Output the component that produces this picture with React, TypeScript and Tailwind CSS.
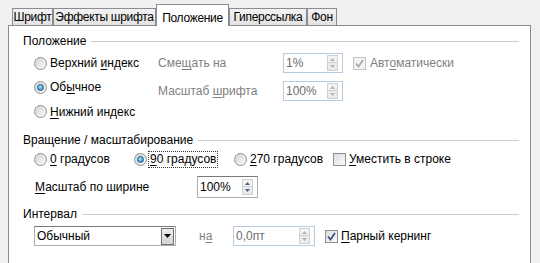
import React from "react";

const font = "font-['Liberation_Sans',Arial,sans-serif]";

function U({ children }: { children: React.ReactNode }) {
  return <span className="underline underline-offset-2">{children}</span>;
}

function Radio({ checked }: { checked?: boolean }) {
  return (
    <span className="flex h-[13px] w-[13px] shrink-0 items-center justify-center rounded-full border border-[#8e8f8f] bg-gradient-to-br from-[#d4d4d4] to-[#fafafa]">
      {checked && (
        <span className="h-[7px] w-[7px] rounded-full border border-[#1a5a8e] bg-[radial-gradient(circle_at_40%_35%,#9fe0ff,#2a78b8)]" />
      )}
    </span>
  );
}

function Check({ checked, disabled }: { checked?: boolean; disabled?: boolean }) {
  return (
    <span
      className={
        disabled
          ? "flex h-[13px] w-[13px] shrink-0 items-center justify-center border border-[#c4c4c4] bg-[#f4f4f4]"
          : "flex h-[13px] w-[13px] shrink-0 items-center justify-center border border-[#8e8f8f] bg-gradient-to-br from-[#dcdcdc] to-[#fbfbfb]"
      }
    >
      {checked && (
        <svg width="11" height="11" viewBox="0 0 11 11">
          <path
            d="M2 5.5 L4.5 8.5 L9 2"
            fill="none"
            stroke={disabled ? "#a8a8a8" : "#3a4f8a"}
            strokeWidth="1.7"
          />
        </svg>
      )}
    </span>
  );
}

function Arrow({ up, color }: { up?: boolean; color: string }) {
  return (
    <svg width="5" height="3" viewBox="0 0 5 3">
      <path d={up ? "M0 3 L2.5 0 L5 3 Z" : "M0 0 L2.5 3 L5 0 Z"} fill={color} />
    </svg>
  );
}

function Spin({
  value,
  w,
  h,
  disabled,
}: {
  value: string;
  w: string;
  h: string;
  disabled?: boolean;
}) {
  const c = disabled ? "#b5b5b5" : "#4d6185";
  return (
    <div
      className={
        (disabled
          ? "border-[#b3cbe3] text-[#6d6d6d] "
          : "border-[#abadb3] border-t-[#7a7a7a] text-black ") +
        "flex shrink-0 items-center justify-between border bg-white pl-[2px] pr-[4px] " +
        w +
        " " +
        h
      }
    >
      <span>{value}</span>
      <div className="flex h-[16px] w-[11px] flex-col">
        <div className="flex h-1/2 items-center justify-center border border-[#d0d0d0] bg-[#f3f3f3]">
          <Arrow up color={c} />
        </div>
        <div className="flex h-1/2 items-center justify-center border border-t-0 border-[#d0d0d0] bg-[#ececec]">
          <Arrow color={c} />
        </div>
      </div>
    </div>
  );
}

function Heading({ children }: { children: React.ReactNode }) {
  return (
    <div className="flex h-[16px] items-center gap-[5px]">
      <span className="shrink-0 leading-none">{children}</span>
      <div className="h-px flex-1 bg-[#cdcdcd]" />
    </div>
  );
}

const tabs = [
  { label: "Шрифт", w: "w-[41px]" },
  { label: "Эффекты шрифта", w: "w-[103px]" },
  { label: "Положение", w: "w-[73px]", active: true },
  { label: "Гиперссылка", w: "w-[78px]" },
  { label: "Фон", w: "w-[30px]" },
];

export default function App() {
  return (
    <div className={"h-[263px] w-[540px] overflow-hidden whitespace-nowrap bg-[#f0f0f0] text-[12px] text-black " + font}>
      <div className="pl-[8px]">
        {/* Tab strip */}
        <div className="flex h-[25px] items-end pl-[4px] tracking-[-0.3px]">
          {tabs.map((t) =>
            t.active ? (
              <div
                key={t.label}
                className={"relative z-10 -mb-px flex h-[22px] items-start justify-center border border-b-0 border-[#898c95] bg-white pt-[4px] " + t.w}
              >
                {t.label}
              </div>
            ) : (
              <div
                key={t.label}
                className={"flex h-[17px] items-center justify-center border border-b-0 border-[#898c95] bg-gradient-to-b from-[#f3f3f3] to-[#e2e2e2] leading-none " + t.w}
              >
                {t.label}
              </div>
            )
          )}
        </div>

        {/* Page */}
        <div className="h-[260px] w-[523px] border border-[#898c95] bg-white pl-[14px] pr-[11px] pt-[7px]">
          <Heading>Положение</Heading>
          <div className="mt-[2px] flex">
            <div className="ml-[11px] flex w-[124px] flex-col">
              <div className="flex h-[24px] items-center gap-[3px]">
                <Radio />
                <span>
                  Верхний <U>и</U>ндекс
                </span>
              </div>
              <div className="flex h-[24px] items-center gap-[3px]">
                <Radio checked />
                <span>
                  Об<U>ы</U>чное
                </span>
              </div>
              <div className="flex h-[25px] items-center gap-[3px]">
                <Radio />
                <span>
                  <U>Н</U>ижний индекс
                </span>
              </div>
            </div>
            <div className="flex flex-col pt-[2px] text-[#7f7f7f]">
              <div className="flex h-[20px] items-center">
                <span className="w-[125px]">
                  Сме<U>щ</U>ать на
                </span>
                <Spin value="1%" w="w-[60px]" h="h-[20px]" disabled />
                <div className="ml-[10px] flex items-center gap-[4px]">
                  <Check checked disabled />
                  <span>
                    Авт<U>о</U>матически
                  </span>
                </div>
              </div>
              <div className="mt-[8px] flex h-[20px] items-center">
                <span className="w-[125px]">
                  Масштаб <U>ш</U>рифта
                </span>
                <Spin value="100%" w="w-[60px]" h="h-[20px]" disabled />
              </div>
            </div>
          </div>

          <div className="mt-[8px]">
            <Heading>Вращение / масштабирование</Heading>
          </div>
          <div className="ml-[11px] mt-[2px] flex h-[18px] items-center">
            <div className="flex w-[100px] items-center gap-[3px]">
              <Radio />
              <span>
                <U>0</U> градусов
              </span>
            </div>
            <div className="flex w-[100px] items-center gap-[1px]">
              <Radio checked />
              <span className="border border-dotted border-[#333] px-[1px] leading-[15px]">
                <U>9</U>0 градусов
              </span>
            </div>
            <div className="flex w-[99px] items-center gap-[3px]">
              <Radio />
              <span>
                <U>2</U>70 градусов
              </span>
            </div>
            <div className="flex items-center gap-[3px]">
              <Check />
              <span>
                <U>У</U>местить в строке
              </span>
            </div>
          </div>
          <div className="ml-[12px] mt-[8px] flex h-[22px] items-center">
            <span className="w-[162px]">
              <U>М</U>асштаб по ширине
            </span>
            <Spin value="100%" w="w-[61px]" h="h-[22px]" />
          </div>

          <div className="mt-[8px]">
            <Heading>Интервал</Heading>
          </div>
          <div className="ml-[11px] mt-[4px] flex h-[20px] items-center">
            <div className="flex h-[20px] w-[142px] items-center justify-between border border-[#abadb3] border-t-[#7a7a7a] bg-white pl-[2px] pr-px">
              <span>Обычный</span>
              <div className="flex h-[17px] w-[13px] items-center justify-center border border-[#707070] bg-gradient-to-b from-[#ececec] to-[#d4d4d4]">
                <svg width="7" height="4" viewBox="0 0 7 4">
                  <path d="M0 0 L3.5 4 L7 0 Z" fill="#000" />
                </svg>
              </div>
            </div>
            <span className="w-[57px] pl-[23px] text-[#7f7f7f]">
              н<U>а</U>
            </span>
            <Spin value="0,0пт" w="w-[82px]" h="h-[20px]" disabled />
            <div className="ml-[10px] flex items-center gap-[3px]">
              <Check checked />
              <span>
                <U>П</U>арный кернинг
              </span>
            </div>
          </div>
        </div>
      </div>
    </div>
  );
}
